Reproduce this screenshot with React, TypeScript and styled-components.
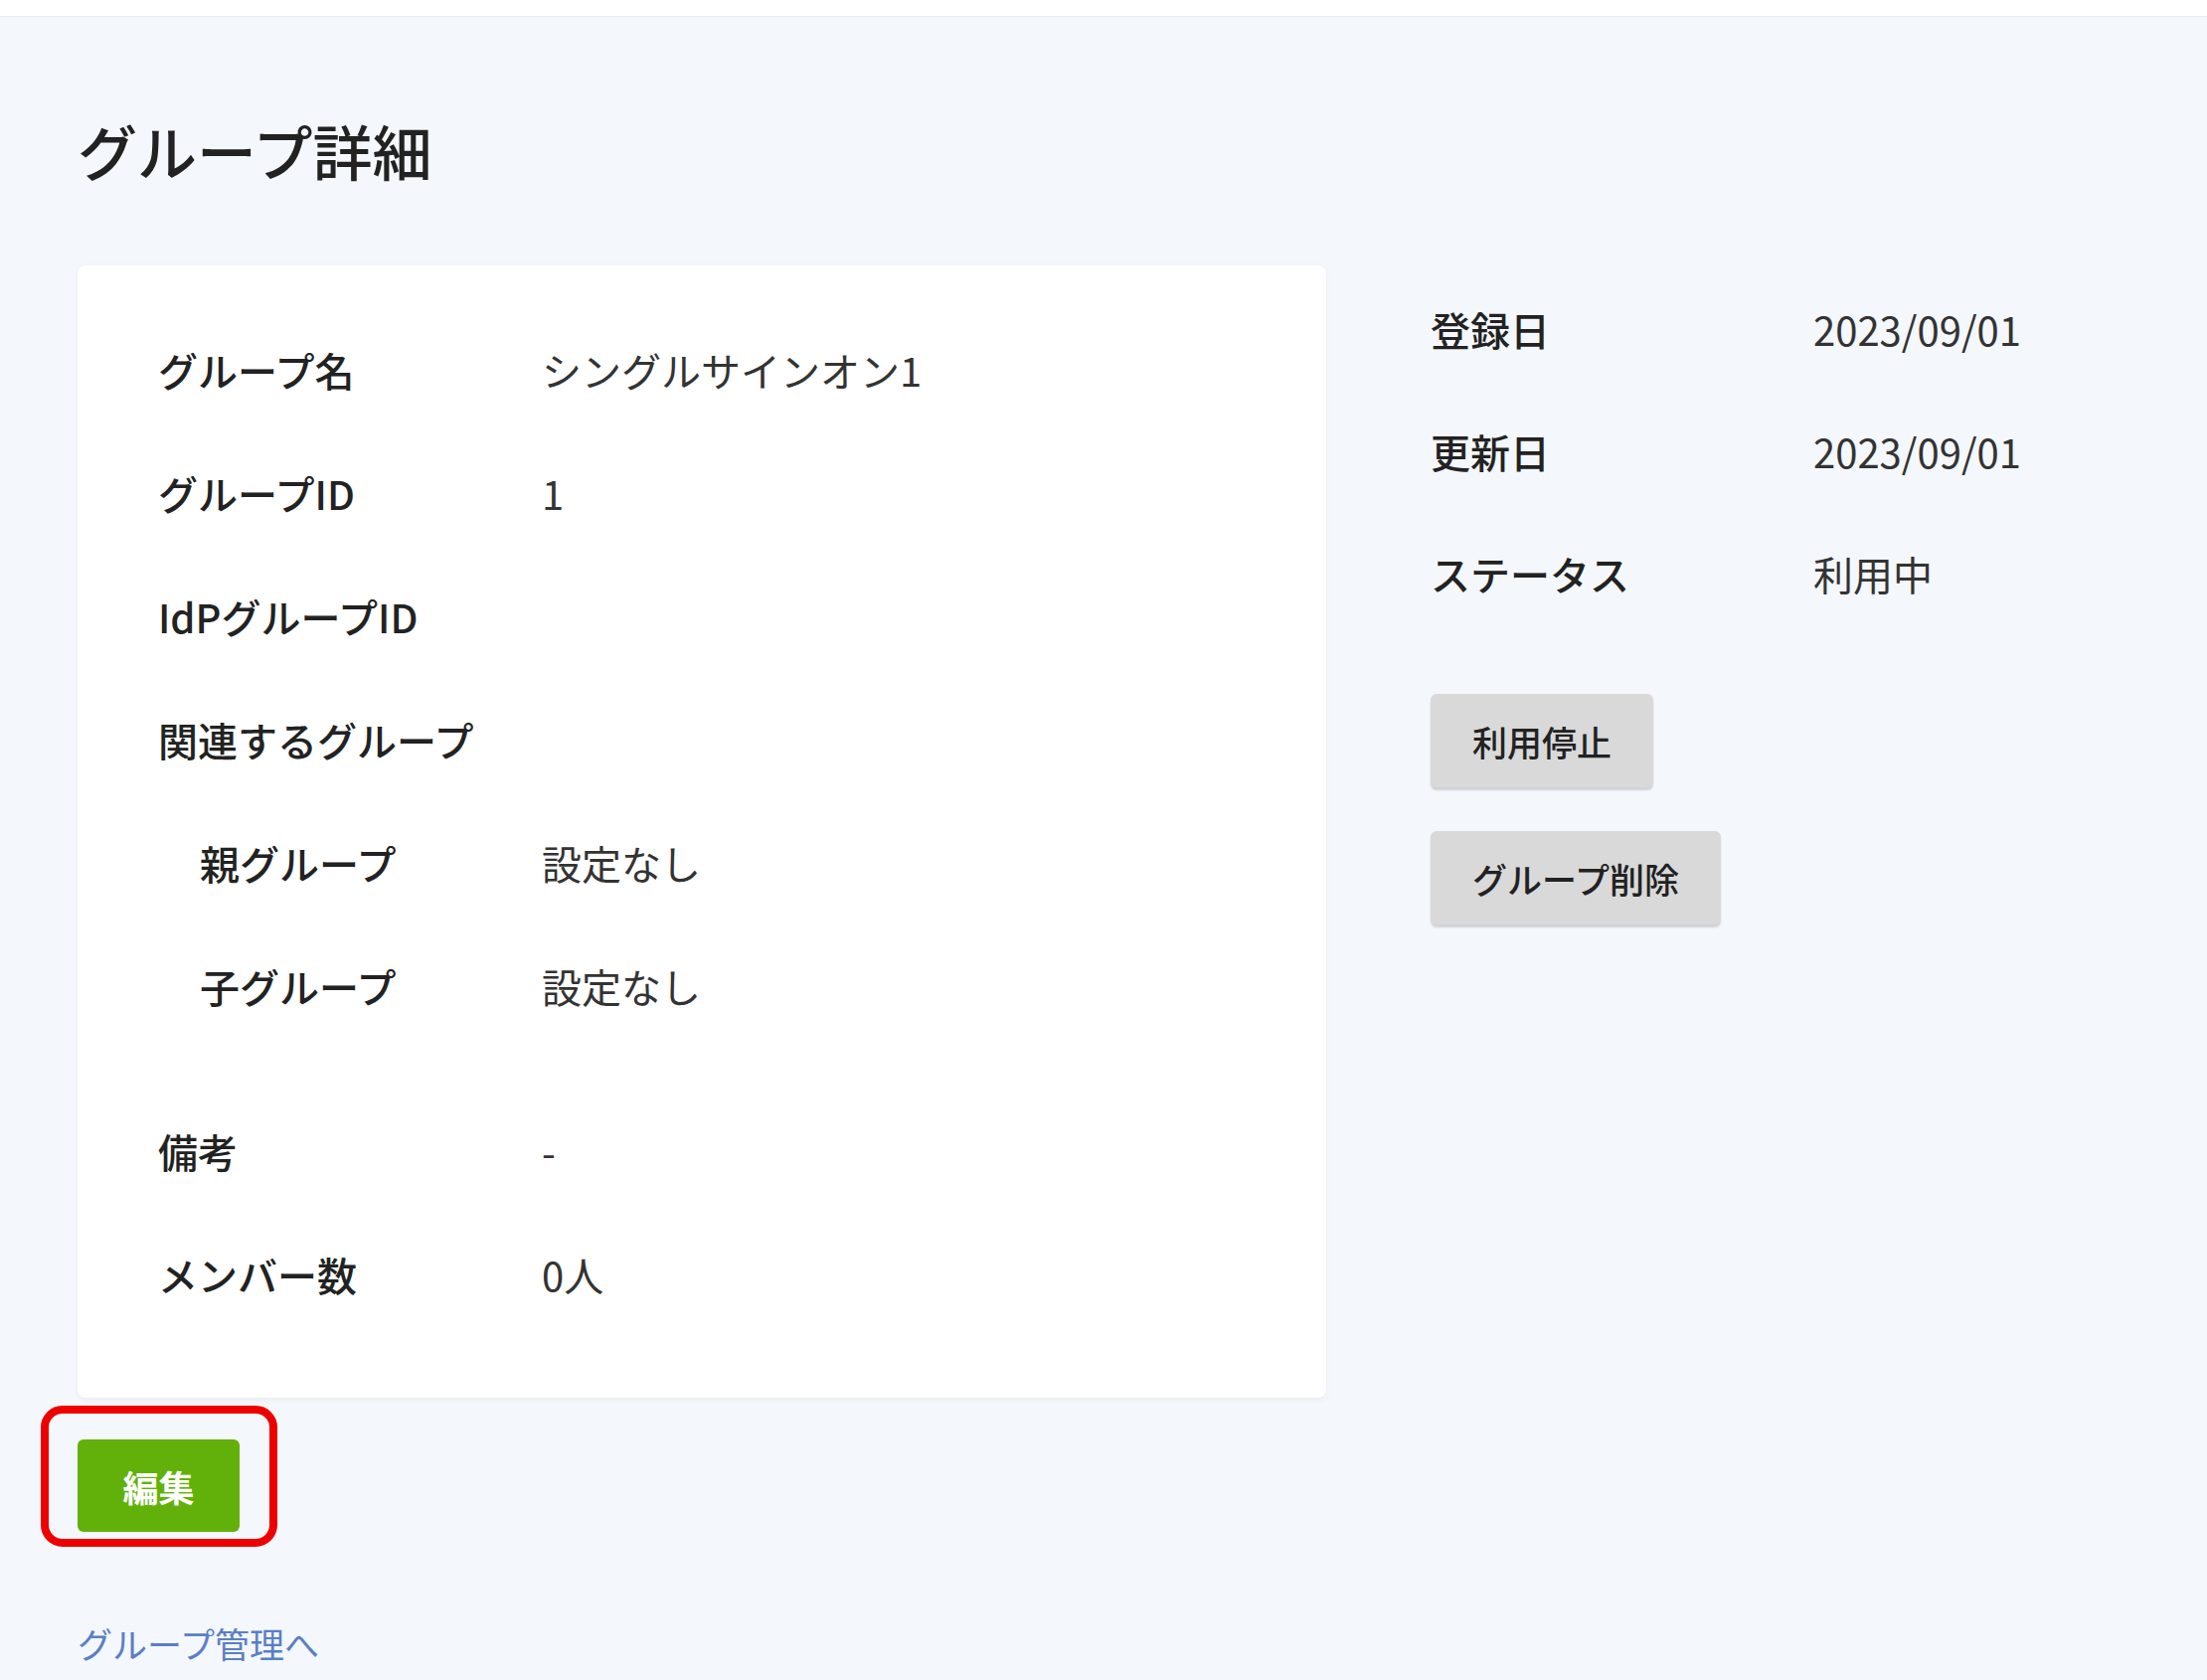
import React from "react";
import styled, { createGlobalStyle } from "styled-components";

const Global = createGlobalStyle`
  html, body { margin: 0; padding: 0; background: #f4f7fb; }
  body { font-family: "Noto Sans CJK JP", "Noto Sans", sans-serif; color: #222; }
`;

const TopBar = styled.div`height: 16px; background: #fff; border-bottom: 1px solid #e6ebf2;`;
const Main = styled.main`padding: 0 78px; position: relative;`;
const Title = styled.h1`margin: 0; padding-top: 104px; height: 146px; box-sizing: border-box; font-size: 60px; font-weight: 500; line-height: 1;`;
const Layout = styled.div`display: flex; gap: 105px; margin-top: 104px; align-items: flex-start;`;
const Card = styled.section`width: 1256px; box-sizing: border-box; background: #fff; border-radius: 8px; box-shadow: 0 2px 6px rgba(0,0,0,0.05); padding: 43px 81px 62px;`;
const Row = styled.div<{ $indent?: boolean; $gapTop?: boolean }>`
  display: flex; align-items: center; height: 124px;
  margin-top: ${p => (p.$gapTop ? "42px" : "0")};
  font-size: 40px;
`;
const Label = styled.div<{ $indent?: boolean }>`
  width: ${p => (p.$indent ? "344px" : "386px")};
  padding-left: ${p => (p.$indent ? "42px" : "0")};
  font-weight: 500;
`;
const Value = styled.div`font-weight: 400; color: #333;`;
const Side = styled.aside`display: flex; flex-direction: column; padding-top: 2px;`;
const SideRow = styled.div`display: flex; align-items: center; height: 123px; font-size: 40px;`;
const SideLabel = styled.div`width: 385px; font-weight: 500;`;
const Buttons = styled.div`display: flex; flex-direction: column; align-items: flex-start; gap: 44px; margin-top: 60px;`;
const GrayButton = styled.button`
  font-family: inherit; font-size: 35px; color: #222; font-weight: 500;
  background: #d9d9d9; border: none; border-radius: 6px; height: 94px; padding: 0 42px;
  box-shadow: 0 3px 2px rgba(0,0,0,0.15);
`;
const EditWrap = styled.div`position: relative; margin-top: 42px; width: 163px;`;
const EditButton = styled.button`
  font-family: inherit; font-size: 36px; font-weight: 700; color: #fff;
  background: #62b10a; border: none; border-radius: 6px; width: 163px; height: 93px;
`;
const Highlight = styled.div`
  position: absolute; left: -37px; top: -34px; width: 238px; height: 142px;
  box-sizing: border-box; border: 8px solid #ee0000; border-radius: 22px;
`;
const Link = styled.a`display: block; margin-top: 86px; font-size: 35px; color: #5a7fc6; text-decoration: none;`;

const rows: { l: string; v: string; indent?: boolean; gapTop?: boolean }[] = [
  { l: "グループ名", v: "シングルサインオン1" },
  { l: "グループID", v: "1" },
  { l: "IdPグループID", v: "" },
  { l: "関連するグループ", v: "" },
  { l: "親グループ", v: "設定なし", indent: true },
  { l: "子グループ", v: "設定なし", indent: true },
  { l: "備考", v: "-", gapTop: true },
  { l: "メンバー数", v: "0人" },
];

export default function App() {
  return (
    <>
      <Global />
      <TopBar />
      <Main>
        <Title>グループ詳細</Title>
        <Layout>
          <Card>
            {rows.map(r => (
              <Row key={r.l} $gapTop={r.gapTop}>
                <Label $indent={r.indent}>{r.l}</Label>
                <Value>{r.v}</Value>
              </Row>
            ))}
          </Card>
          <Side>
            <SideRow><SideLabel>登録日</SideLabel><Value>2023/09/01</Value></SideRow>
            <SideRow><SideLabel>更新日</SideLabel><Value>2023/09/01</Value></SideRow>
            <SideRow><SideLabel>ステータス</SideLabel><Value>利用中</Value></SideRow>
            <Buttons>
              <GrayButton>利用停止</GrayButton>
              <GrayButton>グループ削除</GrayButton>
            </Buttons>
          </Side>
        </Layout>
        <EditWrap>
          <Highlight />
          <EditButton>編集</EditButton>
        </EditWrap>
        <Link href="#">グループ管理へ</Link>
      </Main>
    </>
  );
}
